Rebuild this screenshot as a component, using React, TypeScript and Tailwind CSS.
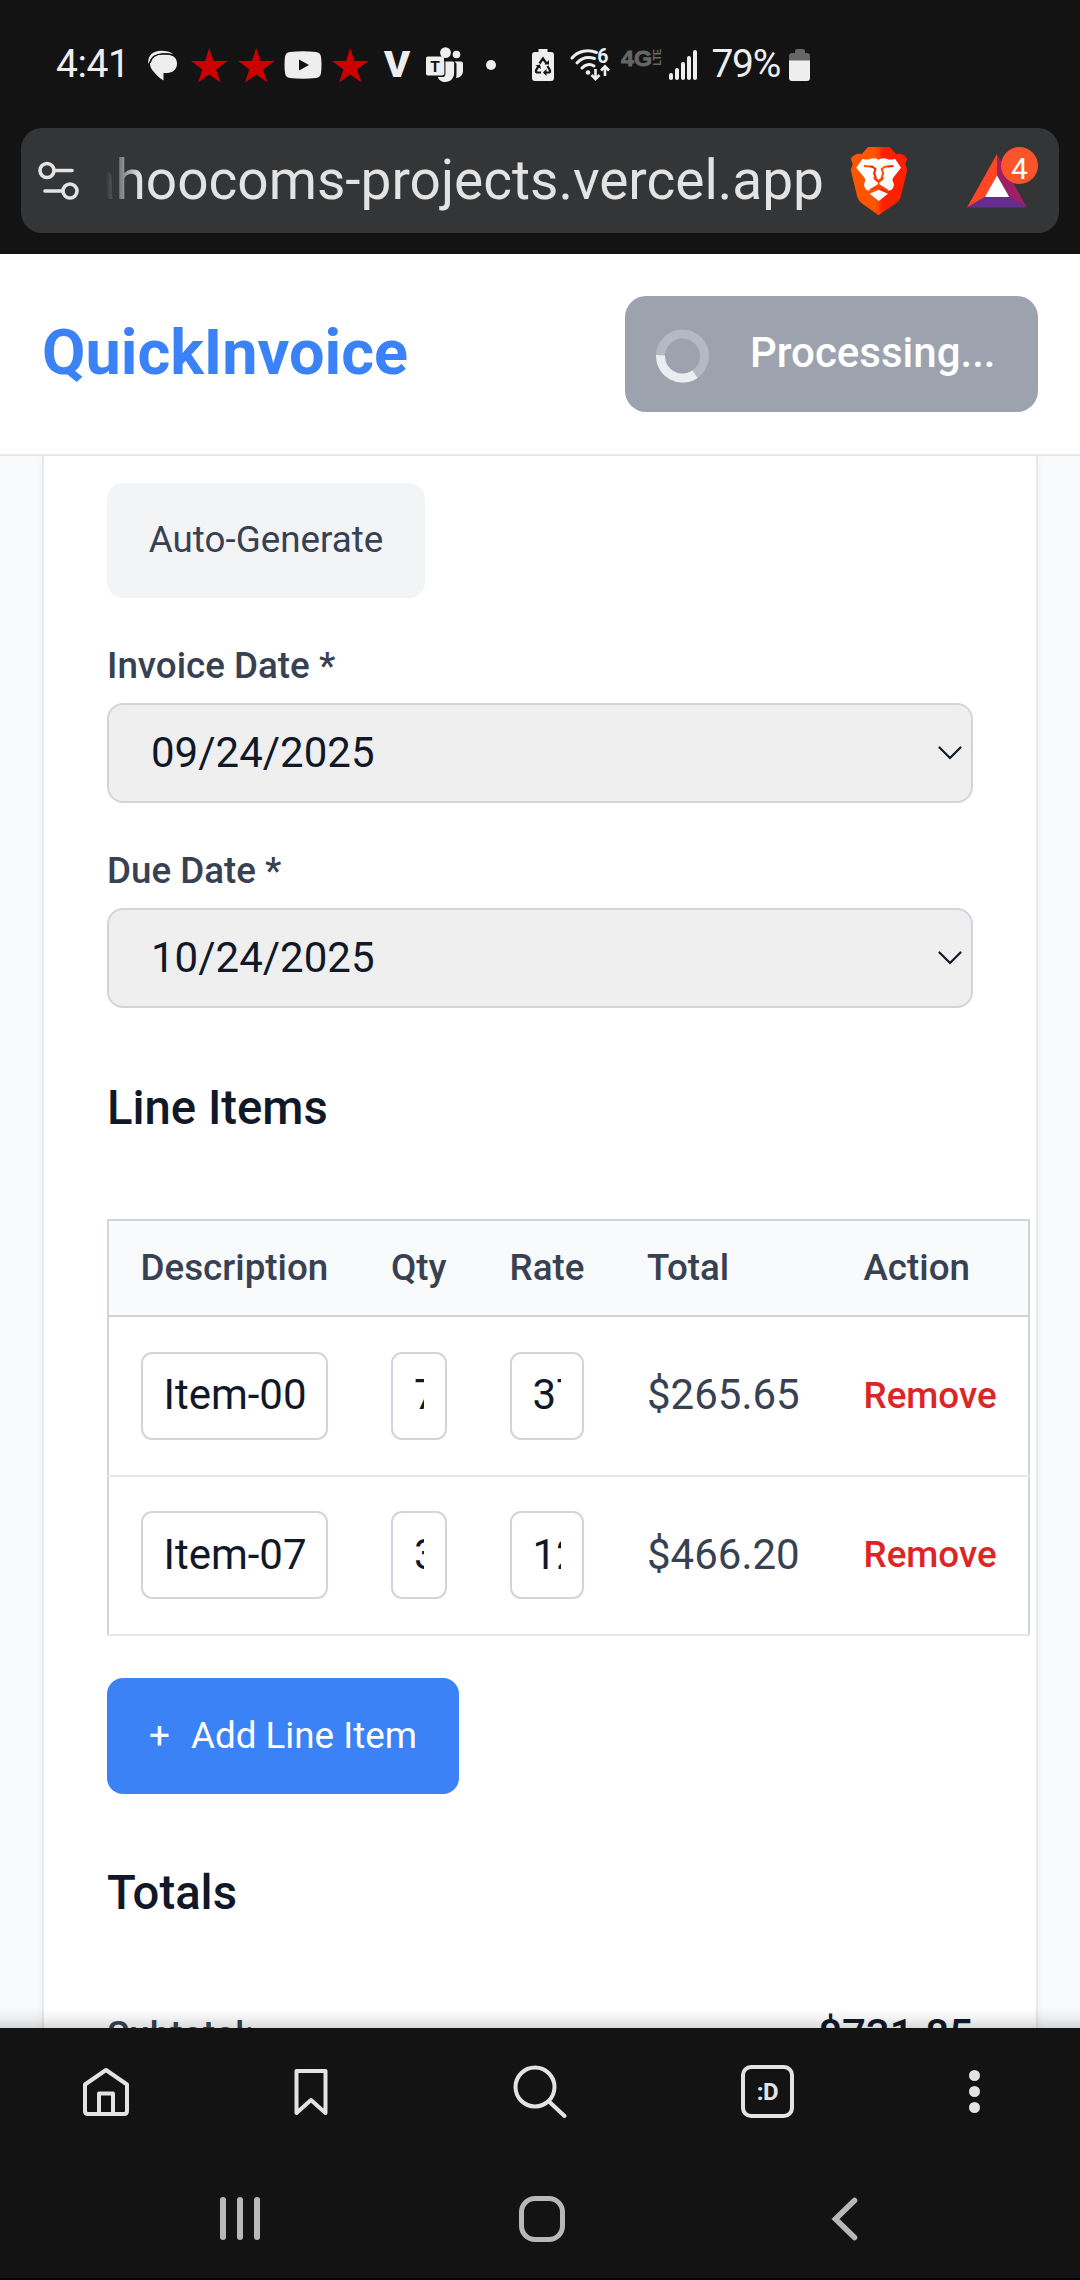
import React from "react";

const LINE_ITEMS = [
  { name: "Item-00", qty: "7", rate: "37", total: "$265.65" },
  { name: "Item-07", qty: "3", rate: "12", total: "$466.20" },
];

function Star({ className }: { className: string }) {
  return (
    <svg className={className} width="37" height="35" viewBox="0 0 37 35">
      <path fill="#cc0000" d="M18.2 0 22.4 13H36.5L25.1 21.4 29.5 34.6 18.2 26.5 7 34.6 11.4 21.4 0 13H14Z" />
    </svg>
  );
}

function StatusBar() {
  return (
    <div className="flex h-[128px] items-center pt-[2px] text-[#eeeeee]">
      <span className="ml-[56px] w-[91px] whitespace-nowrap pb-px text-[39px] leading-none tracking-[-0.4px]">4:41</span>
      <svg width="31" height="31" viewBox="0 0 31 31" className="shrink-0">
        <path d="M1.5 14C0 6 6 .8 14 .8c5 0 9 .8 12.300 3.200C18 2.400 8 3.500 4.500 8 3 10 2.400 12 1.500 14Z" fill="#eee" />
        <path d="M15.500 4.500h4C26 4.500 30 8 30 13.500S26 23 20 23h-3.500v7.500C12 28 9 24.500 6.500 21.500 4 19 3 16 3 13.500 3 8 8 4.500 15.500 4.500Z" fill="#eee" />
        <path d="M3 13C4.500 6.500 9.500 4 16 3.900c4 0 7 .3 9.500 1.100" fill="none" stroke="#131313" strokeWidth="1.200" />
      </svg>
      <Star className="ml-[12.500px] shrink-0" />
      <Star className="ml-[10px] shrink-0" />
      <svg width="38" height="28" viewBox="0 0 38 28" className="ml-[9.500px] shrink-0">
        <path fill="#eee" d="M6 1Q19-.5 32 1 36.500 1.500 37 6 38 14 37 22 36.500 26.500 32 27 19 28.500 6 27 1.500 26.500 1 22 0 14 1 6 1.500 1.500 6 1Z" />
        <path fill="#131313" d="M15 8.500 25 14 15 19.500Z" />
      </svg>
      <Star className="ml-[9.500px] shrink-0" />
      <span className="ml-[15px] w-[28px] origin-left scale-x-110 text-[36px] font-black leading-none">V</span>
      <svg width="38" height="36" viewBox="0 0 38 36" className="ml-[14px] shrink-0">
        <circle cx="19.500" cy="5.600" r="5.400" fill="#eee" />
        <circle cx="30.500" cy="7.500" r="3.800" fill="#eee" />
        <path fill="#eee" d="M28.500 14.500H35a2 2 0 0 1 2 2V24c0 4-3 7-7 7a18 18 0 0 0 .5-5V16.500Z" />
        <path fill="#eee" d="M18 14.500h8.500a1.600 1.600 0 0 1 1.600 1.600V26c0 5-3.600 9-8.600 9-4 0-7-2-8-6h6.500Z" />
        <rect x="0" y="9.500" width="18" height="19" rx="1.800" fill="#eee" />
        <path d="M11 29.500h5.500a2.400 2.400 0 0 0 2.400-2.400V11.500" fill="none" stroke="#131313" strokeWidth="1.100" />
        <text x="9" y="24.500" textAnchor="middle" fontFamily="Roboto, sans-serif" fontWeight="700" fontSize="15.500" fill="#131313">T</text>
      </svg>
      <div className="ml-[22px] size-[10px] shrink-0 rounded-full bg-[#eeeeee]" />
      <svg width="22" height="32" viewBox="0 0 22 32" className="ml-[36px] shrink-0">
        <path fill="#eee" d="M6.500 0h9v3H19a3 3 0 0 1 3 3v23a3 3 0 0 1-3 3H3a3 3 0 0 1-3-3V6a3 3 0 0 1 3-3h3.500Z" />
        <g fill="none" stroke="#131313" strokeWidth="2.200">
          <path d="M7.500 14.500 11 9.500l3.500 5" />
          <path d="M6.500 17 4 21.500Q3.500 23.500 5.500 23.500H9" />
          <path d="M15.500 17 18 21.500Q18.500 23.500 16.500 23.500H12" />
        </g>
        <path fill="#131313" d="M12.500 15.500h4.500v-4.500ZM3.500 16.500l4.500-1 1 4.500ZM14.500 20v7L11 23.500Z" />
      </svg>
      <svg width="41" height="32" viewBox="0 0 41 32" className="ml-[16px] shrink-0 overflow-visible">
        <g fill="none" stroke="#eee" strokeWidth="3" strokeLinecap="round">
          <path d="M2 9C8 2 18 0 26.500 3.500" />
          <path d="M7 14C12 8.500 18 7.500 24.500 9.500" />
          <path d="M12 19C15 15.500 20 14.500 24 17" />
        </g>
        <circle cx="18" cy="23.500" r="2.300" fill="#eee" />
        <path d="M25.500 20v9.500M21.500 26l4 4.200 4-4.200M35 27v-9.500M31 21.500l4-4.200 4 4.200" fill="none" stroke="#eee" strokeWidth="2.600" />
        <text x="32.800" y="14" textAnchor="middle" fontFamily="Roboto, sans-serif" fontWeight="700" fontSize="19.500" fill="#eee">6</text>
      </svg>
      <svg width="41" height="18" viewBox="0 0 41 18" className="mb-[15px] ml-[10px] shrink-0 overflow-visible">
        <text x="0" y="16.500" textLength="31" lengthAdjust="spacingAndGlyphs" fontFamily="Liberation Sans, sans-serif" fontWeight="700" fontSize="22.500" fill="#666" stroke="#666" strokeWidth="0.800">4G</text>
        <text x="-16.500" y="39.500" transform="rotate(-90)" textLength="16.500" lengthAdjust="spacingAndGlyphs" fontFamily="Liberation Sans, sans-serif" fontWeight="700" fontSize="10" fill="#666">LTE</text>
      </svg>
      <div className="ml-[7px] flex h-[30px] items-end gap-[2px]">
        <div className="h-[7px] w-[4px] rounded-full bg-[#eeeeee]" />
        <div className="h-[12px] w-[4px] rounded-full bg-[#eeeeee]" />
        <div className="h-[18px] w-[4px] rounded-full bg-[#eeeeee]" />
        <div className="h-[24px] w-[4px] rounded-full bg-[#eeeeee]" />
        <div className="h-[30px] w-[4px] rounded-full bg-[#eeeeee]" />
      </div>
      <span className="ml-[15px] w-[77px] whitespace-nowrap pb-px text-[39px] leading-none tracking-[-1.300px]">79%</span>
      <svg width="21" height="32" viewBox="0 0 21 32" className="shrink-0">
        <path fill="#666" d="M8 0h6a2 2 0 0 1 2 2v2h2a3 3 0 0 1 3 3v5H0V7a3 3 0 0 1 3-3h3V2a2 2 0 0 1 2-2Z" />
        <path fill="#eee" d="M0 11.500h21V29a3 3 0 0 1-3 3H3a3 3 0 0 1-3-3Z" />
      </svg>
    </div>
  );
}

function BraveLogo() {
  return (
    <svg width="60" height="70" viewBox="900 377 174 210" preserveAspectRatio="none" className="shrink-0">
      <defs>
        <linearGradient id="shield" x1="0" x2="1" y1="0" y2="0">
          <stop offset="0.430" stopColor="#ff5500" />
          <stop offset="0.500" stopColor="#ff4000" />
          <stop offset="0.560" stopColor="#ff2000" />
        </linearGradient>
      </defs>
      <path fill="url(#shield)" d="M955 380H1018L1036 401Q1055 396 1069 415L1063 431 1069 448 1050 530Q1046 542 1036 549L986 585 937 549Q928 542 924 530L905 448 911 431 905 415Q918 396 937 401Z" />
      <path fill="#fff" d="M939 416Q956 420 963 415 974 411 986 418 998 411 1009 415 1016 420 1034 416L1051 442 1028 472Q1024 478 1028 486 1034 496 1024 508L1014 511 986 496 960 511 950 508Q940 496 946 486 949 478 945 472L921 442Z" />
      <path fill="#fff" d="M986 508 1013 520 986 542 960 520Z" />
      <g fill="none" stroke="url(#shield)" strokeWidth="6" strokeLinejoin="round">
        <path d="M943 437 968 439 977 446 973 459 978 474" />
        <path d="M1029 437 1004 439 995 446 999 459 994 474" />
      </g>
      <path fill="#ff4000" d="M969 471 978 472 986 478 994 472 1003 471 998 479 988 487V492L1014 508 1009 513 986 500 963 513 958 508 984 492V487L974 479Z" />
    </svg>
  );
}

function RewardsLogo() {
  return (
    <div className="relative shrink-0">
      <svg width="60" height="54" viewBox="0 0 60 54" className="mt-[1px]">
        <path fill="#ff4724" d="M30 0V21.500L18.500 43 0 53.500Z" />
        <path fill="#9e1f63" d="M30 0 60 53.500 42 43 30 21.500Z" />
        <path fill="#662d91" d="M18.500 42.500H42L60 53.500H0Z" />
        <path fill="#fff" d="M30 21.500 42.300 43H18Z" />
      </svg>
      <div className="absolute -top-[7px] left-[34px] flex size-[37px] items-center justify-center rounded-full bg-[#fb542b] pt-[6px] text-[30px] leading-none text-white">
        4
      </div>
    </div>
  );
}

function UrlBar() {
  return (
    <div className="mx-[21px] flex h-[105px] items-center rounded-[21px] bg-[#343536] pl-[17px]">
      <svg width="42" height="40" viewBox="0 0 42 40" fill="none" stroke="#e3e3e3" strokeWidth="3.600" strokeLinecap="round" className="shrink-0">
        <circle cx="9" cy="9.500" r="7" />
        <path d="M17 9.500H34" />
        <circle cx="32" cy="30" r="7" />
        <path d="M7 30H24" />
      </svg>
      <div className="relative ml-[26px] flex h-[80px] w-[718px] items-center justify-end overflow-hidden pb-[2px]">
        <span className="shrink-0 whitespace-nowrap text-[55px] leading-[76px] text-[#e3e3e3]">ahoocoms-projects.vercel.app</span>
        <div className="absolute inset-y-0 left-0 w-[34px] bg-gradient-to-r from-[#343536] to-transparent" />
      </div>
      <div className="ml-[25px]">
        <BraveLogo />
      </div>
      <div className="ml-[58px]">
        <RewardsLogo />
      </div>
    </div>
  );
}

function Spinner() {
  return (
    <svg width="53" height="54" viewBox="0 0 53 54" fill="none" strokeWidth="9" className="mt-[4px] shrink-0">
      <circle cx="26.500" cy="27" r="22" stroke="#b4b9c4" />
      <path d="M4.500 26.200A22 22 0 0 0 39 45.200" stroke="#ebedf0" />
    </svg>
  );
}

function DateField({ label, value }: { label: string; value: string }) {
  return (
    <div className="mt-[41px]">
      <div className="mb-[11px] h-[53px] text-[36.750px] font-medium leading-[53px] text-[#374151]">{label}</div>
      <div className="flex h-[100px] items-center justify-between rounded-[16px] border-2 border-[#d1d5db] bg-[#efefef] pb-px pl-[42px] pr-[9px]">
        <span className="text-[42px] leading-[63px] text-[#111827]">{value}</span>
        <svg width="24" height="14" viewBox="0 0 24 14" fill="none" stroke="#111827" strokeWidth="2.200" strokeLinecap="round">
          <path d="M1.500 1.500 12 12 22.500 1.500" />
        </svg>
      </div>
    </div>
  );
}

function CellInput({ value }: { value: string }) {
  return (
    <div className="flex h-[88px] min-w-0 flex-1 items-center rounded-[11px] border-2 border-[#d1d5db] bg-white px-[21px]">
      <div className="w-full overflow-hidden whitespace-nowrap pb-[2px] text-[42px] leading-[63px] text-[#111827]">{value}</div>
    </div>
  );
}

function LineItemsTable() {
  return (
    <div className="mt-[74px] w-[923px] border-x-2 border-t-2 border-[#d1d5db]">
      <div className="grid h-[96px] grid-cols-[250.5px_118.5px_137.5px_216.5px_196px] items-center border-b-2 border-[#d1d5db] bg-[#f9fafb] pb-px text-[36.750px] font-medium leading-[53px] text-[#374151]">
        <div className="pl-[31.500px]">Description</div>
        <div className="pl-[31.500px]">Qty</div>
        <div className="pl-[31.500px]">Rate</div>
        <div className="pl-[31.500px]">Total</div>
        <div className="pl-[31.500px]">Action</div>
      </div>
      {LINE_ITEMS.map((item) => (
        <div
          key={item.name}
          className="-mx-[2px] grid h-[159.500px] grid-cols-[250.5px_118.5px_137.5px_216.5px_196px] items-center border-b-2 border-[#e5e7eb] px-[2px]"
        >
          <div className="flex px-[31.500px]"><CellInput value={item.name} /></div>
          <div className="flex px-[31.500px]"><CellInput value={item.qty} /></div>
          <div className="flex px-[31.500px]"><CellInput value={item.rate} /></div>
          <div className="pb-[2px] pl-[31.500px] text-[42px] leading-[63px] text-[#374151]">{item.total}</div>
          <div className="pb-px pl-[31.500px] text-[36.750px] font-medium leading-[53px] text-[#dc2626]">Remove</div>
        </div>
      ))}
    </div>
  );
}

function BrowserToolbar() {
  return (
    <div className="flex h-[127px] items-center text-[#e3e3e3]">
      <svg width="50" height="50" viewBox="0 0 50 50" fill="none" stroke="currentColor" strokeWidth="4" strokeLinejoin="round" className="ml-[81px]">
        <path d="M25 3 46 17.500V44Q46 47 43 47H7Q4 47 4 44V17.500Z" />
        <path d="M18 47V26.500H32V47" />
      </svg>
      <svg width="34" height="50" viewBox="0 0 34 50" fill="none" stroke="currentColor" strokeWidth="4" strokeLinejoin="round" className="ml-[163px]">
        <path d="M2.500 4H31.500V46L17 33 2.500 46Z" />
      </svg>
      <svg width="54" height="54" viewBox="0 0 54 54" fill="none" stroke="currentColor" strokeWidth="4" strokeLinecap="round" className="ml-[185px]">
        <circle cx="22" cy="22" r="19.500" />
        <path d="M36 36.500 51.500 51" />
      </svg>
      <div className="ml-[174px] flex size-[53px] items-center justify-center rounded-[10px] border-4 border-[#e3e3e3] text-[24px] font-bold leading-none tracking-[-0.500px]">
        :D
      </div>
      <div className="ml-[175px] flex flex-col gap-[5px]">
        <div className="size-[11px] rounded-full bg-[#e3e3e3]" />
        <div className="size-[11px] rounded-full bg-[#e3e3e3]" />
        <div className="size-[11px] rounded-full bg-[#e3e3e3]" />
      </div>
    </div>
  );
}

function SystemNav() {
  return (
    <div className="flex h-[125px] items-center border-b-2 border-[#080308] pt-[6px]">
      <div className="mb-[2px] ml-[220px] flex gap-[11px]">
        <div className="h-[43px] w-[6px] rounded-full bg-[#b8b8b8]" />
        <div className="h-[43px] w-[6px] rounded-full bg-[#b8b8b8]" />
        <div className="h-[43px] w-[6px] rounded-full bg-[#b8b8b8]" />
      </div>
      <div className="mb-[2px] ml-[259px] size-[46px] rounded-[16px] border-[5.500px] border-[#b8b8b8]" />
      <svg width="28" height="46" viewBox="0 0 28 46" fill="none" stroke="#b8b8b8" strokeWidth="5.600" strokeLinecap="round" className="mb-[2px] ml-[266px]">
        <path d="M23.500 4.500 4.500 23 23.500 41.500" />
      </svg>
    </div>
  );
}

export default function App() {
  return (
    <div className="flex h-[2280px] w-[1080px] flex-col overflow-hidden bg-[#131313] font-['Roboto',sans-serif]">
      <StatusBar />
      <UrlBar />

      <header className="mt-[21px] flex h-[202px] shrink-0 items-center justify-between border-b-2 border-[#e5e7eb] bg-white px-[42px]">
        <h1 className="pb-[3px] text-[63px] font-bold leading-[84px] text-[#3b82f6]">QuickInvoice</h1>
        <button className="flex h-[116px] w-[413px] items-center rounded-[21px] bg-[#9ca3af] pl-[31px]">
          <Spinner />
          <span className="ml-[41px] pb-[3px] text-[42px] font-medium leading-[63px] text-white">Processing...</span>
        </button>
      </header>

      <main className="relative h-[1572px] shrink-0 overflow-hidden bg-[#f9fafb] px-[42px]">
        <section className="h-[1700px] border-x-2 border-[#e5e7eb] bg-white px-[63px] pt-[27px] shadow-[0_3px_8px_rgba(0,0,0,0.05)]">
          <button className="flex h-[115px] w-[318px] items-center justify-center rounded-[16px] bg-[#f3f4f6] pb-[3px] text-[36.750px] leading-[53px] text-[#374151]">
            Auto-Generate
          </button>

          <DateField label="Invoice Date *" value="09/24/2025" />
          <DateField label="Due Date *" value="10/24/2025" />

          <h2 className="mt-[63px] h-[74px] text-[47.250px] font-medium leading-[74px] text-[#111827]">Line Items</h2>
          <LineItemsTable />

          <button className="mt-[42px] flex h-[116px] w-[352px] items-center justify-center gap-[21px] rounded-[16px] bg-[#3b82f6] pb-[2px] text-[36.750px] leading-[53px] text-white">
            <span>+</span>
            <span>Add Line Item</span>
          </button>

          <h2 className="mt-[62px] h-[74px] text-[47.250px] font-medium leading-[74px] text-[#111827]">Totals</h2>
          <div className="mt-[73px] flex h-[63px] items-center justify-between">
            <span className="text-[36.750px] font-medium leading-[63px] text-[#374151]">Subtotal:</span>
            <span className="text-[42px] font-medium leading-[63px] text-[#111827]">$731.85</span>
          </div>
        </section>
        <div className="absolute inset-x-0 bottom-0 h-[20px] bg-gradient-to-b from-transparent via-black/5 to-black/15" />
      </main>

      <BrowserToolbar />
      <SystemNav />
    </div>
  );
}
